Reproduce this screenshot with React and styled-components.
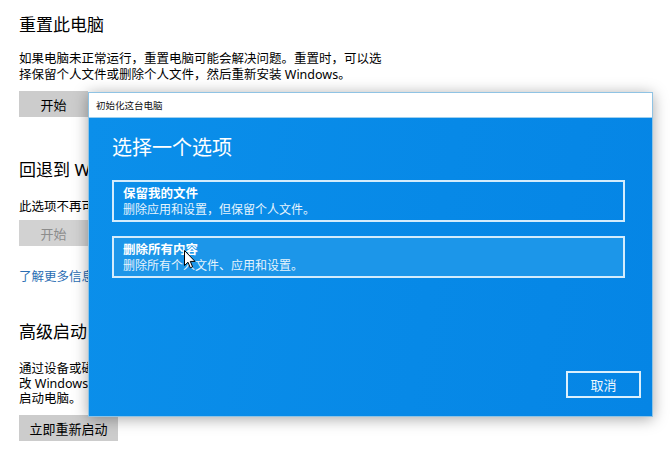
import React from "react";
import styled, { createGlobalStyle } from "styled-components";

const GlobalStyle = createGlobalStyle`
  html, body {
    margin: 0;
    padding: 0;
    background: #fff;
  }
  body {
    font-family: "Noto Sans", "Noto Sans CJK SC", sans-serif;
    color: #000;
  }
`;

const Page = styled.div`
  position: relative;
  width: 672px;
  height: 449px;
  overflow: hidden;
  padding: 13px 0 0 19px;
  box-sizing: border-box;
  background: #fff;
`;

const Heading = styled.div`
  font-size: 17px;
  line-height: 24px;
  margin-top: ${(p) => p.top || 0}px;
  white-space: nowrap;
`;

const Para = styled.div`
  font-size: 12.5px;
  line-height: ${(p) => p.lh || 16}px;
  margin-top: ${(p) => p.top || 0}px;
  width: 372px;
  white-space: nowrap;
`;

const Button = styled.div`
  width: ${(p) => p.w || 69}px;
  height: 26px;
  margin-top: ${(p) => p.top || 0}px;
  display: flex;
  align-items: center;
  justify-content: center;
  font-size: 13px;
  background: ${(p) => (p.disabled ? "#d2d2d2" : "#cccccc")};
  color: ${(p) => (p.disabled ? "#8c8c8c" : "#000")};
`;

const Link = styled.div`
  font-size: 12.5px;
  line-height: 16px;
  margin-top: ${(p) => p.top || 0}px;
  color: #2b6eb3;
`;

const Dialog = styled.div`
  position: absolute;
  left: 88px;
  top: 92px;
  width: 565px;
  height: 325px;
  display: flex;
  flex-direction: column;
  box-shadow: 0 2px 14px rgba(0, 0, 0, 0.35);
  border: 1px solid #8fc3e4;
  box-sizing: border-box;
`;

const TitleBar = styled.div`
  height: 24px;
  background: #fff;
  display: flex;
  align-items: center;
  padding-left: 7px;
  font-size: 9.5px;
  color: #111;
  border-bottom: 1px solid #9fd0ef;
`;

const Body = styled.div`
  flex: 1;
  display: flex;
  flex-direction: column;
  padding: 16px 11px 18px 23px;
  background: linear-gradient(100deg, #0b8fea 0%, #0789e7 60%, #0585e5 100%);
  color: #fff;
`;

const DialogTitle = styled.div`
  font-size: 20px;
  line-height: 28px;
  margin-bottom: 18px;
`;

const Option = styled.div`
  height: 42px;
  box-sizing: border-box;
  margin-right: 16px;
  margin-bottom: 14px;
  border: 2px solid #d3ecfc;
  padding: 4px 9px;
  background: ${(p) => (p.hover ? "#1c96e9" : "transparent")};
`;

const OptionTitle = styled.div`
  font-size: 12.5px;
  line-height: 16px;
  font-weight: 700;
`;

const OptionText = styled.div`
  font-size: 12px;
  line-height: 16px;
  color: #e6f4fd;
`;

const Footer = styled.div`
  margin-top: auto;
  display: flex;
  justify-content: flex-end;
`;

const Cancel = styled.div`
  width: 75px;
  height: 27px;
  box-sizing: border-box;
  border: 2px solid #dbf0fd;
  display: flex;
  align-items: center;
  justify-content: center;
  font-size: 13px;
  color: #f2f9fe;
`;

const Cursor = styled.svg`
  position: absolute;
  left: 184px;
  top: 250px;
`;

export default function App() {
  return (
    <>
      <GlobalStyle />
      <Page>
        <Heading>重置此电脑</Heading>
        <Para top={14}>
          如果电脑未正常运行，重置电脑可能会解决问题。重置时，可以选
          <br />
          择保留个人文件或删除个人文件，然后重新安装 Windows。
        </Para>
        <Button top={8}>开始</Button>

        <Heading top={41}>回退到 Windows 10 的上一个版本</Heading>
        <Para top={17}>此选项不再可用，因为你的电脑更新已超过 10 天。</Para>
        <Button top={5} disabled>
          开始
        </Button>
        <Link top={23}>了解更多信息</Link>

        <Heading top={35}>高级启动</Heading>
        <Para top={17} lh={15}>
          通过设备或磁盘(如 U 盘或 DVD)启动，更
          <br />
          改 Windows 启动设置，或者从系统映像还原 Windows。这将重新
          <br />
          启动电脑。
        </Para>
        <Button top={9} w={99}>
          立即重新启动
        </Button>

        <Dialog>
          <TitleBar>初始化这台电脑</TitleBar>
          <Body>
            <DialogTitle>选择一个选项</DialogTitle>
            <Option>
              <OptionTitle>保留我的文件</OptionTitle>
              <OptionText>删除应用和设置，但保留个人文件。</OptionText>
            </Option>
            <Option hover>
              <OptionTitle>删除所有内容</OptionTitle>
              <OptionText>删除所有个人文件、应用和设置。</OptionText>
            </Option>
            <Footer>
              <Cancel>取消</Cancel>
            </Footer>
          </Body>
        </Dialog>

        <Cursor width="12" height="19" viewBox="0 0 12 19">
          <path
            d="M0.5 0.5 L0.5 15.5 L4 12.2 L6.3 17.8 L8.6 16.8 L6.3 11.4 L11 11.4 Z"
            fill="#fff"
            stroke="#000"
            strokeWidth="1"
            strokeLinejoin="round"
          />
        </Cursor>
      </Page>
    </>
  );
}
